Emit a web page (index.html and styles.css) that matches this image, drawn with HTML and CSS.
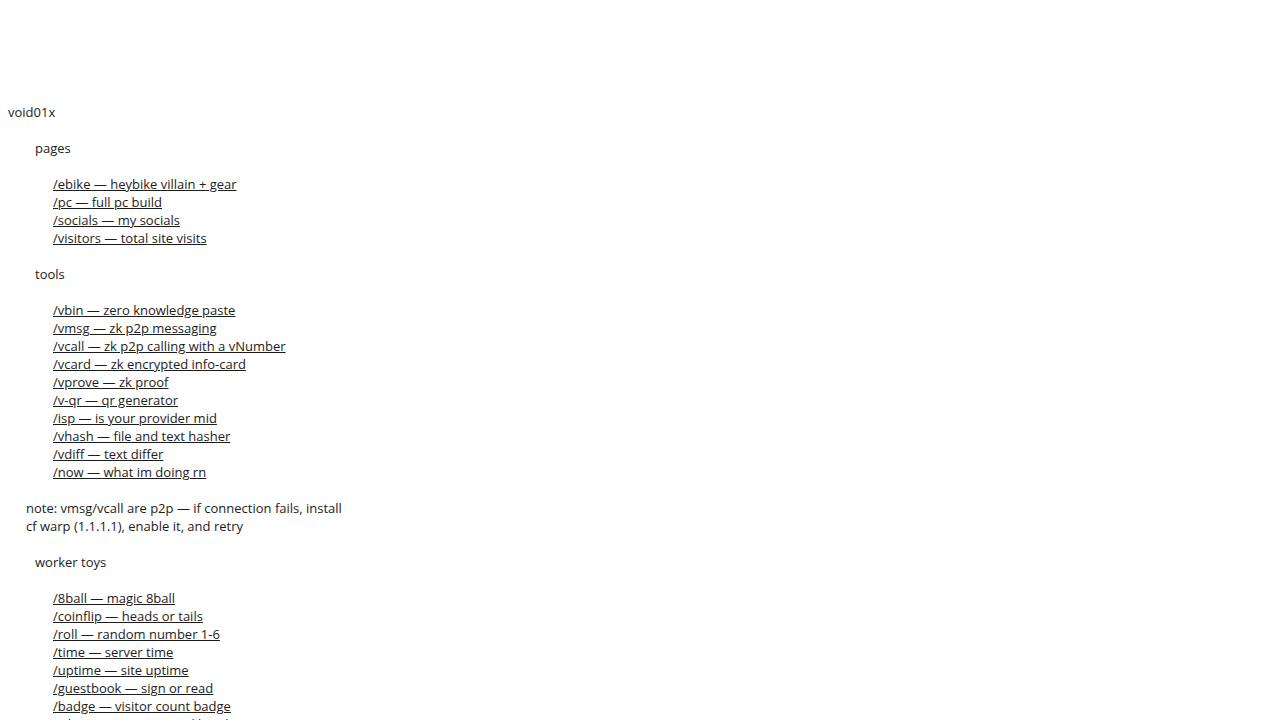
FILE: index.html
```html
<!DOCTYPE html>
<html lang="en">
<head>
<meta charset="utf-8">
<title>void01x</title>
<link rel="stylesheet" href="styles.css">
</head>
<body>
<main class="page">
  <div class="brand">void01x</div>
  <section class="group">
    <h2 class="group-title">pages</h2>
    <ul class="links">
      <li><a href="#">/ebike — heybike villain + gear</a></li>
      <li><a href="#">/pc — full pc build</a></li>
      <li><a href="#">/socials — my socials</a></li>
      <li><a href="#">/visitors — total site visits</a></li>
    </ul>
  </section>
  <section class="group">
    <h2 class="group-title">tools</h2>
    <ul class="links">
      <li><a href="#">/vbin — zero knowledge paste</a></li>
      <li><a href="#">/vmsg — zk p2p messaging</a></li>
      <li><a href="#">/vcall — zk p2p calling with a vNumber</a></li>
      <li><a href="#">/vcard — zk encrypted info-card</a></li>
      <li><a href="#">/vprove — zk proof</a></li>
      <li><a href="#">/v-qr — qr generator</a></li>
      <li><a href="#">/isp — is your provider mid</a></li>
      <li><a href="#">/vhash — file and text hasher</a></li>
      <li><a href="#">/vdiff — text differ</a></li>
      <li><a href="#">/now — what im doing rn</a></li>
    </ul>
  </section>
  <p class="note">note: vmsg/vcall are p2p — if connection fails, install cf warp (1.1.1.1), enable it, and retry</p>
  <section class="group">
    <h2 class="group-title">worker toys</h2>
    <ul class="links">
      <li><a href="#">/8ball — magic 8ball</a></li>
      <li><a href="#">/coinflip — heads or tails</a></li>
      <li><a href="#">/roll — random number 1-6</a></li>
      <li><a href="#">/time — server time</a></li>
      <li><a href="#">/uptime — site uptime</a></li>
      <li><a href="#">/guestbook — sign or read</a></li>
      <li><a href="#">/badge — visitor count badge</a></li>
      <li><a href="#">/whoami — your ip and headers</a></li>
    </ul>
  </section>
</main>
</body>
</html>
```
FILE: styles.css
```css
html, body {
  background: #ffffff;
}
body {
  margin: 8px;
  font-family: "Open Sans", "DejaVu Sans", sans-serif;
  font-size: 13px;
  line-height: 18px;
  color: #1c1c1c;
}
.page {
  display: flex;
  flex-direction: column;
  gap: 18px;
  padding-top: 95px;
}
.brand {
  margin: 0;
}
.group {
  display: flex;
  flex-direction: column;
  gap: 18px;
}
.group-title {
  margin: 0;
  padding-left: 27px;
  font-size: 13px;
  font-weight: 400;
  line-height: 18px;
}
.links {
  list-style: none;
  margin: 0;
  padding: 0 0 0 45px;
}
.links a {
  color: inherit;
  text-decoration: underline;
}
.note {
  margin: 0;
  padding-left: 18px;
  width: 322px;
}
```
